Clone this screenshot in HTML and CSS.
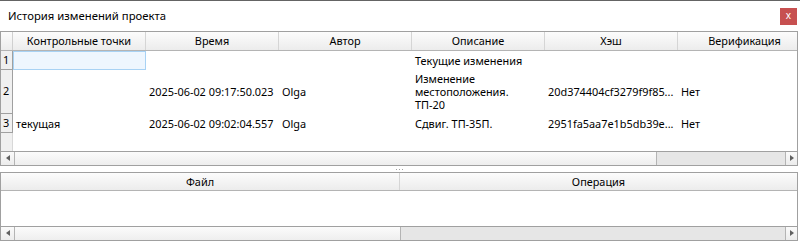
FILE: index.html
```html
<!DOCTYPE html>
<html lang="ru">
<head>
    <meta charset="UTF-8">
    <meta name="viewport" content="width=device-width, initial-scale=1.0">
    <title>История изменений проекта</title>
    <link rel="stylesheet" href="styles.css">
</head>
<body>
    <div class="window">
        <div class="titlebar">
            <span class="title">История изменений проекта</span>
            <div class="close">x</div>
        </div>

        <!-- commits table -->
        <div class="panel top-panel">
            <div class="grid head">
                <div class="corner"></div>
                <div class="hcell">Контрольные точки</div>
                <div class="hcell">Время</div>
                <div class="hcell">Автор</div>
                <div class="hcell">Описание</div>
                <div class="hcell">Хэш</div>
                <div class="hcell last">Верификация</div>
            </div>
            <div class="rows">
                <div class="grid row single">
                    <div class="rnum">1</div>
                    <div class="cell current"></div>
                    <div class="cell"></div>
                    <div class="cell"></div>
                    <div class="cell">Текущие изменения</div>
                    <div class="cell"></div>
                    <div class="cell"></div>
                </div>
                <div class="grid row triple">
                    <div class="rnum">2</div>
                    <div class="cell"></div>
                    <div class="cell">2025-06-02 09:17:50.023</div>
                    <div class="cell">Olga</div>
                    <div class="cell wrap">Изменение местоположения. ТП-20</div>
                    <div class="cell">20d374404cf3279f9f85...</div>
                    <div class="cell">Нет</div>
                </div>
                <div class="grid row single">
                    <div class="rnum">3</div>
                    <div class="cell">текущая</div>
                    <div class="cell">2025-06-02 09:02:04.557</div>
                    <div class="cell">Olga</div>
                    <div class="cell">Сдвиг. ТП-35П.</div>
                    <div class="cell">2951fa5aa7e1b5db39e...</div>
                    <div class="cell">Нет</div>
                </div>
                <div class="filler"></div>
            </div>
            <div class="hscroll">
                <div class="arrow left"></div>
                <div class="thumb" style="width: 642px"></div>
                <div class="track"></div>
                <div class="arrow right"></div>
            </div>
        </div>

        <div class="splitter"><span class="grip"></span></div>

        <!-- files table -->
        <div class="panel bottom-panel">
            <div class="files-head">
                <div class="hcell">Файл</div>
                <div class="hcell last">Операция</div>
            </div>
            <div class="files-body"></div>
            <div class="hscroll">
                <div class="arrow left"></div>
                <div class="thumb" style="width: 386px"></div>
                <div class="track"></div>
                <div class="arrow right"></div>
            </div>
        </div>
    </div>
</body>
</html>
```

FILE: styles.css
```css
* {
    box-sizing: border-box;
}
body {
    margin: 0;
    background-color: #fff;
    font-family: "Noto Sans", "Open Sans", sans-serif;
    font-size: 10.9px;
    color: #000;
}
.window {
    width: 800px;
    height: 241px;
    border-top: 1px solid #646464;
    display: flex;
    flex-direction: column;
}
.titlebar {
    height: 30px;
    display: flex;
    align-items: center;
    justify-content: space-between;
    padding: 0 3px 0 8px;
}
.title {
    font-size: 11.3px;
    margin-top: -1px;
}
.close {
    width: 17px;
    height: 17px;
    margin-top: 2px;
    background-color: #c75050;
    color: #fff;
    font-size: 10px;
    line-height: 15px;
    text-align: center;
}
.panel {
    width: 798px;
    border: 1px solid #a0a0a0;
    display: flex;
    flex-direction: column;
    overflow: hidden;
}
.top-panel {
    height: 136px;
}
.bottom-panel {
    height: 69px;
}
.grid {
    display: grid;
    grid-template-columns: 12px 133px 133px 133px 133px 133px 133px;
}
.head {
    height: 19px;
    border-bottom: 1px solid #b4b4b4;
    background: linear-gradient(#fcfcfc, #ececec);
}
.corner {
    border-right: 1px solid #d0d0d0;
}
.hcell {
    text-align: center;
    line-height: 18px;
    border-right: 1px solid #d5d5d5;
    white-space: nowrap;
}
.hcell.last {
    border-right: none;
}
.rows {
    flex: 1;
    display: flex;
    flex-direction: column;
}
.row.single {
    height: 19px;
}
.row.triple {
    height: 44px;
}
.rnum {
    background-color: #f0f0f0;
    border-right: 1px solid #a0a0a0;
    border-bottom: 1px solid #a0a0a0;
    padding-left: 2px;
    line-height: 16px;
    display: flex;
    align-items: center;
}
.cell {
    padding: 0 3px;
    line-height: 13px;
    display: flex;
    align-items: center;
    white-space: nowrap;
}
.cell.wrap {
    white-space: normal;
    padding-right: 40px;
}
.cell.current {
    background-color: #eef6fe;
    border: 1px solid #a8d2f4;
}
.filler {
    flex: 1;
    width: 12px;
    background-color: #f0f0f0;
    border-right: 1px solid #d8d8d8;
}
.hscroll {
    height: 14px;
    border-top: 1px solid #a0a0a0;
    display: flex;
    background-color: #e6e6e6;
}
.arrow {
    width: 14px;
    position: relative;
    background: linear-gradient(#fafafa, #ececec);
}
.arrow.left {
    border-right: 1px solid #b4b4b4;
}
.arrow.right {
    width: 12px;
    border-left: 1px solid #b4b4b4;
}
.arrow::after {
    content: "";
    position: absolute;
    top: 3px;
    border-top: 3px solid transparent;
    border-bottom: 3px solid transparent;
}
.arrow.left::after {
    left: 5px;
    border-right: 4px solid #606060;
}
.arrow.right::after {
    left: 4px;
    border-left: 4px solid #606060;
}
.thumb {
    background: linear-gradient(#fbfbfb, #eeeeee);
    border-right: 1px solid #b4b4b4;
}
.track {
    flex: 1;
}
.splitter {
    height: 6px;
    display: flex;
    justify-content: center;
    align-items: center;
}
.grip {
    width: 9px;
    height: 1px;
    background-image: linear-gradient(to right, #a0a0a0 1px, transparent 1px);
    background-size: 3px 1px;
}
.files-head {
    height: 18px;
    display: grid;
    grid-template-columns: 399px 1fr;
    border-bottom: 1px solid #b4b4b4;
    background: linear-gradient(#fcfcfc, #ececec);
}
.files-head .hcell {
    line-height: 17px;
}
.files-body {
    flex: 1;
}
```
